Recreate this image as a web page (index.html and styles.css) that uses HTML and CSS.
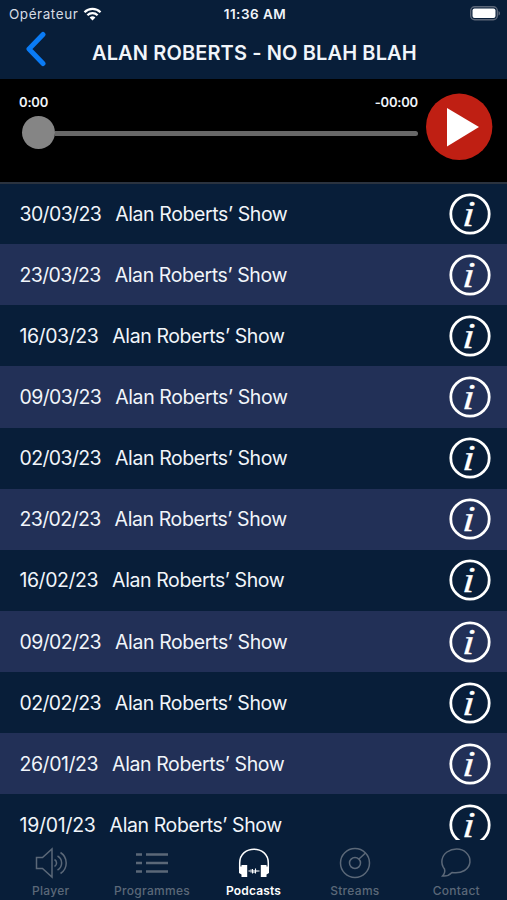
FILE: index.html
```html
<!DOCTYPE html>
<html lang="fr">
<head>
    <meta charset="UTF-8">
    <meta name="viewport" content="width=device-width, initial-scale=1.0">
    <title>Podcasts</title>
    <link rel="stylesheet" href="styles.css">
</head>
<body>
<div class="status-bar">
    <div class="carrier">
        <span>Opérateur</span>
        <svg class="wifi" width="19" height="14" viewBox="0 0 18 14" fill="none" stroke="#fff" stroke-width="2.3">
            <path d="M1 5.2a11.4 11.4 0 0 1 16 0"/>
            <path d="M3.9 8.3a7.3 7.3 0 0 1 10.2 0"/>
            <path d="M9 13.5L6.1 10.6a4.2 4.2 0 0 1 5.8 0z" fill="#fff" stroke="none"/>
        </svg>
    </div>
    <div class="time">11:36 AM</div>
    <svg class="battery" width="31" height="15" viewBox="0 0 31 15">
        <rect x="0.7" y="0.7" width="26.6" height="13" rx="4" fill="none" stroke="#5c6779" stroke-width="1.4"/>
        <rect x="2.5" y="2.5" width="23" height="9.4" rx="2" fill="#fff"/>
        <path d="M28.5 5v4.6c2-.8 2-3.8 0-4.6z" fill="#5c6779"/>
    </svg>
</div>

<header class="header">
    <svg class="back" width="22" height="36" viewBox="0 0 22 36">
        <path d="M18 3.500L4 18L18 32.500" fill="none" stroke="#0a7bf5" stroke-width="5" stroke-linecap="round" stroke-linejoin="round"/>
    </svg>
    <h1>ALAN ROBERTS - NO BLAH BLAH</h1>
</header>

<section class="player">
    <div class="progress">
        <div class="times"><span>0:00</span><span>-00:00</span></div>
        <div class="slider"><div class="thumb"></div><div class="track"></div></div>
    </div>
    <svg class="play" width="68" height="68" viewBox="0 0 68 68">
        <circle cx="34.200" cy="33.800" r="33.200" fill="#bf1f13"/>
        <path d="M22 15L54 34L22 53.500z" fill="#fff"/>
    </svg>
</section>

<main class="list" id="list"></main>

<nav class="tabs">
    <a class="tab">
        <svg width="34" height="34" viewBox="0 0 34 34" fill="none" stroke="currentColor" stroke-width="1.5">
            <path d="M2.500 11.500H8.500L18 3V31L8.500 22.500H2.500z"/>
            <path d="M20.500 13.500a4 4 0 0 1 0 7M23.500 10a8 8 0 0 1 0 14M26.500 6.500a12.500 12.500 0 0 1 0 21"/>
        </svg>
        <span>Player</span>
    </a>
    <a class="tab">
        <svg width="34" height="34" viewBox="0 0 34 34" fill="none" stroke="currentColor" stroke-width="2.5">
            <path d="M1 8.500H7M11 8.500H33M1 17H7M11 17H33M1 25.500H7M11 25.500H33"/>
        </svg>
        <span>Programmes</span>
    </a>
    <a class="tab active">
        <svg width="34" height="34" viewBox="0 0 34 34" fill="none" stroke="currentColor" stroke-width="1.500">
            <path d="M2.700 23V17C2.700 -1.500 31.300 -1.500 31.300 17V23"/>
            <path d="M4.500 19H10.200V31H4.500V28.500L2 27V20.500H4.500zM29.500 19H23.800V31H29.500V28.500L32 27V20.500H29.500z" fill="currentColor" stroke="none"/>
            <path d="M11.500 25H13M14 23.500V26.500M15.500 23V27.500M17 24V27M18.500 22.500V27.500M20 24V26M21 25H22.500" stroke-width="1.100"/>
        </svg>
        <span>Podcasts</span>
    </a>
    <a class="tab">
        <svg width="34" height="34" viewBox="0 0 34 34" fill="none" stroke="currentColor" stroke-width="1.500">
            <circle cx="17" cy="17" r="14.500"/>
            <circle cx="17" cy="17" r="5.500"/>
            <path d="M21 13L27.500 7"/>
        </svg>
        <span>Streams</span>
    </a>
    <a class="tab">
        <svg width="34" height="34" viewBox="0 0 34 34" fill="none" stroke="currentColor" stroke-width="1.500">
            <path d="M5.500 23C1 17.500 2.500 10 8 6C14 2 22 2 27 6.500C33 12 32 20.500 25.500 24.500C20.500 27.500 16 27 13 26.500C10.500 29 7 30.500 3.500 30C5.500 28 6.300 26 5.500 23z"/>
        </svg>
        <span>Contact</span>
    </a>
</nav>

<script>
    const dates = ["30/03/23", "23/03/23", "16/03/23", "09/03/23", "02/03/23", "23/02/23",
        "16/02/23", "09/02/23", "02/02/23", "26/01/23", "19/01/23"];

    // a "1" is narrow, so dates that have one are spaced a little wider
    function jarakTanggal(date) {
        const ones = date.split("1").length - 1;
        return ones ? `ones-${ones}` : "";
    }

    document.getElementById("list").innerHTML = dates.map(date =>
        `<div class="row">
            <span class="date ${jarakTanggal(date)}">${date}</span>
            <span class="show">Alan Roberts’ Show</span>
            <svg class="info" width="42" height="42" viewBox="0 0 42 42">
                <circle cx="21" cy="21" r="19.2" fill="none" stroke="#fff" stroke-width="2.8"/>
                <text x="0" y="0" text-anchor="middle" transform="translate(19 33) scale(1.15 0.98) skewX(-4)">i</text>
            </svg>
        </div>`).join("");
</script>
</body>
</html>
```
FILE: styles.css
```css
body {
    display: flex;
    flex-direction: column;
    width: 507px;
    height: 900px;
    margin: 0;
    overflow: hidden;
    background: #081e39;
    color: #f1f5fa;
    font-family: Inter, sans-serif;
}

/* Status bar */
.status-bar {
    display: grid;
    grid-template-columns: 1fr auto 1fr;
    align-items: center;
    height: 27px;
    padding: 0 6px 0 9px;
    font-size: 13.5px;
}

.carrier {
    display: flex;
    align-items: center;
    gap: 5px;
    color: #d5dbe3;
    letter-spacing: 0.55px;
}

.time {
    font-weight: 600;
    letter-spacing: 0.5px;
}

.battery {
    justify-self: end;
}

/* Header */
.header {
    display: flex;
    align-items: center;
    height: 52px;
}

.back {
    margin: -8px 0 0 25px;
}

h1 {
    margin: -1px 0 0 45px;
    font-size: 20px;
    font-weight: 600;
    letter-spacing: 0.12px;
    white-space: nowrap;
}

/* Player */
.player {
    display: flex;
    height: 103px;
    background: #000;
    border-bottom: 2px solid #2b333f;
}

.progress {
    width: 399px;
    padding: 15px 0 0 19px;
}

.times {
    display: flex;
    justify-content: space-between;
    font-size: 13px;
    font-weight: 600;
    letter-spacing: -0.2px;
    line-height: 16px;
}

.slider {
    display: flex;
    align-items: center;
    margin: 6px 0 0 3px;
}

.thumb {
    width: 33px;
    height: 33px;
    border-radius: 50%;
    background: #858585;
}

.track {
    flex: 1;
    height: 5px;
    margin-top: 2px;
    border-radius: 0 3px 3px 0;
    background: #686868;
}

.play {
    margin: 14px 0 0 7px;
}

/* Podcast list */
.list {
    flex: 1;
    margin-top: -1px;
    overflow: hidden;
}

.row {
    display: flex;
    align-items: center;
    height: 61.15px;
    padding: 0 16.5px 0 19.5px;
    font-size: 19.5px;
}

.row:nth-child(even) {
    background: #223057;
}

.date {
    font-kerning: none;
    letter-spacing: -0.63px;
}

.ones-1 {
    letter-spacing: -0.45px;
}

.ones-2 {
    letter-spacing: -0.27px;
}

.show {
    margin-left: 14px;
    letter-spacing: -0.4px;
}

.info {
    margin-left: auto;
}

.info text {
    fill: #fff;
    stroke: #fff;
    stroke-width: 0.3px;
    font: italic 37px "Liberation Serif", serif;
}

/* Tabs */
.tabs {
    display: flex;
    height: 60px;
}

.tab {
    display: flex;
    flex: 1;
    flex-direction: column;
    align-items: center;
    padding-top: 6px;
    color: #5b6878;
    font-size: 12px;
    font-weight: 500;
    letter-spacing: 0.3px;
    line-height: 22px;
}

.tab svg {
    flex-shrink: 0;
}

.active {
    color: #fff;
    font-weight: 600;
    letter-spacing: 0.15px;
}
```
